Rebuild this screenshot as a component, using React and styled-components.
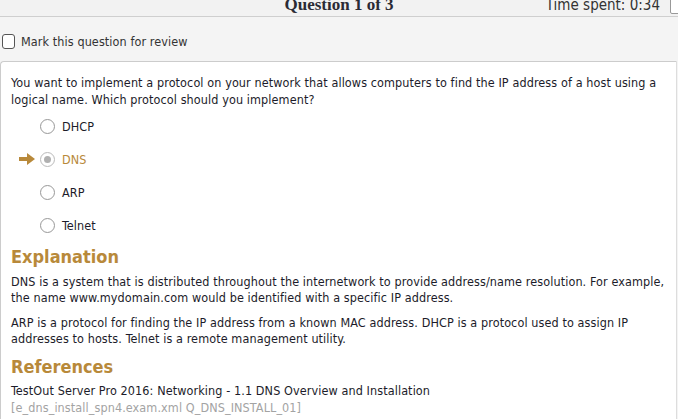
import React from 'react';
import styled, { createGlobalStyle } from 'styled-components';

const GlobalStyle = createGlobalStyle`
  html, body {
    margin: 0;
    padding: 0;
    background: #f4f4f4;
    overflow: hidden;
  }
  body {
    font-family: "DejaVu Sans Condensed", "DejaVu Sans", sans-serif;
    font-size: 12.5px;
    letter-spacing: 0.1px;
    color: #1c1c2a;
  }
`;

const options = ['DHCP', 'DNS', 'ARP', 'Telnet'];
const answer = 'DNS';

const App = () => {
  return (
    <>
      <GlobalStyle />
      <Page>
        <Header>
          <Title>Question 1 of 3</Title>
          <Timer>Time spent: 0:34</Timer>
          <CornerButton />
        </Header>
        <ReviewRow>
          <CheckBox />
          <span>Mark this question for review</span>
        </ReviewRow>
        <Panel>
          <Question>
            You want to implement a protocol on your network that allows computers to find the IP address of a host using a
            logical name. Which protocol should you implement?
          </Question>
          <Options>
            {options.map((opt) => (
              <Option key={opt} $correct={opt === answer}>
                <Marker>
                  {opt === answer && (
                    <svg width="16" height="12" viewBox="0 0 16 12">
                      <path d="M0 4 H8 V0 L16 6 L8 12 V8 H0 Z" fill="#b8893a" />
                    </svg>
                  )}
                </Marker>
                <Radio $checked={opt === answer} />
                <span>{opt}</span>
              </Option>
            ))}
          </Options>
          <Heading $gap={6}>Explanation</Heading>
          <Para>
            DNS is a system that is distributed throughout the internetwork to provide address/name resolution. For example,
            the name www.mydomain.com would be identified with a specific IP address.
          </Para>
          <Para>
            ARP is a protocol for finding the IP address from a known MAC address. DHCP is a protocol used to assign IP
            addresses to hosts. Telnet is a remote management utility.
          </Para>
          <Heading $gap={4}>References</Heading>
          <RefLine>TestOut Server Pro 2016: Networking - 1.1 DNS Overview and Installation</RefLine>
          <RefLine $muted>[e_dns_install_spn4.exam.xml Q_DNS_INSTALL_01]</RefLine>
        </Panel>
      </Page>
    </>
  );
};

const Page = styled.div`
  width: 678px;
  height: 419px;
  overflow: hidden;
`;

const Header = styled.div`
  height: 16px;
  border-bottom: 1px solid #cfcfcf;
  background: #f2f2f2;
  position: relative;
  display: flex;
  align-items: flex-end;
  justify-content: center;
  overflow: hidden;
`;

const Title = styled.div`
  font-family: "Liberation Serif", "DejaVu Serif", serif;
  font-weight: bold;
  font-size: 17px;
  line-height: 17px;
  letter-spacing: 0;
  color: #2b2b35;
  margin-bottom: 3px;
  margin-left: 0;
`;

const Timer = styled.div`
  position: absolute;
  right: 18px;
  bottom: 3px;
  font-size: 15px;
  line-height: 15px;
  letter-spacing: 0;
  color: #333;
`;

const CornerButton = styled.div`
  position: absolute;
  right: -6px;
  bottom: 2px;
  width: 12px;
  height: 16px;
  border: 1px solid #999;
  border-radius: 2px;
  background: #fff;
`;

const ReviewRow = styled.div`
  display: flex;
  align-items: center;
  gap: 6px;
  padding: 17px 0 0 2px;
  height: 14px;
  color: #333;
`;

const CheckBox = styled.div`
  width: 11px;
  height: 13px;
  border: 1px solid #555;
  border-radius: 3px;
  background: #fff;
`;

const Panel = styled.div`
  margin-top: 13px;
  background: #fff;
  border: 1px solid #ccc;
  border-right-color: #ddd;
  border-radius: 4px 0 0 0;
  padding: 12px 10px 20px 10px;
  margin-right: 1px;
  height: 400px;
  box-sizing: border-box;
`;

const Question = styled.p`
  margin: 0;
  line-height: 17px;
`;

const Options = styled.div`
  margin: 10px 0 13px;
  display: flex;
  flex-direction: column;
  gap: 17px;
`;

const Option = styled.div`
  display: flex;
  align-items: center;
  height: 16px;
  color: ${(p) => (p.$correct ? '#b8893a' : '#1c1c2a')};
`;

const Marker = styled.div`
  width: 29px;
  display: flex;
  align-items: center;
  padding-left: 8px;
  box-sizing: border-box;
`;

const Radio = styled.div`
  width: 13px;
  height: 13px;
  border-radius: 50%;
  border: 1px solid ${(p) => (p.$checked ? '#bbb' : '#999')};
  background: radial-gradient(circle, #fff 60%, #f0f0f0 100%);
  margin-right: 7px;
  position: relative;
  &::after {
    content: '';
    display: ${(p) => (p.$checked ? 'block' : 'none')};
    position: absolute;
    left: 3px;
    top: 3px;
    width: 7px;
    height: 7px;
    border-radius: 50%;
    background: #b0b0b0;
  }
`;

const Heading = styled.h2`
  margin: 0 0 ${(p) => p.$gap}px;
  font-size: 18px;
  line-height: 22px;
  font-weight: bold;
  letter-spacing: 0;
  color: #b8893a;
`;

const Para = styled.p`
  margin: 0 0 9px;
  line-height: 16px;
`;

const RefLine = styled.div`
  line-height: 17px;
  color: ${(p) => (p.$muted ? '#a3a3a3' : '#1c1c2a')};
`;

export default App;
